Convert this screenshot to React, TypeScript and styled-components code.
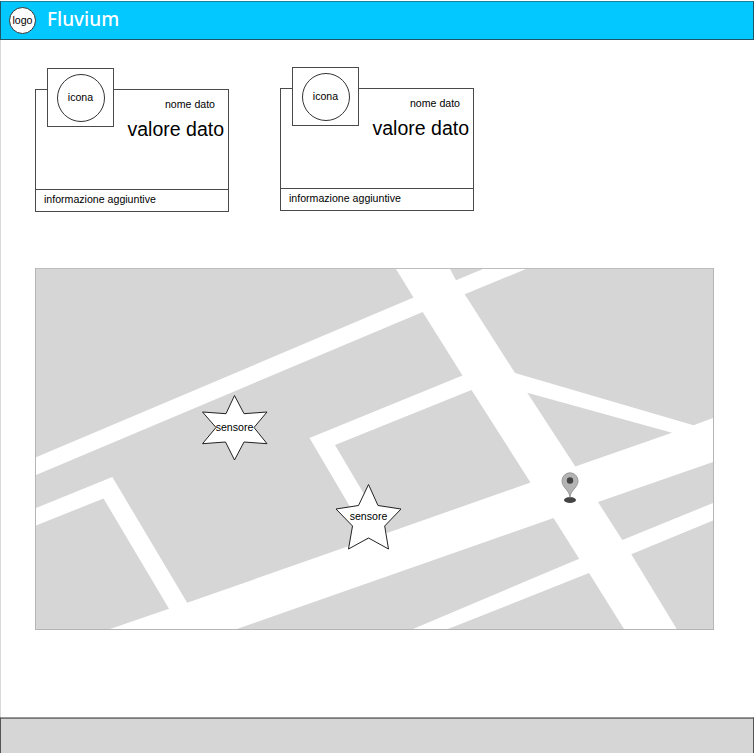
import React from "react";
import styled, { createGlobalStyle } from "styled-components";

const GlobalStyle = createGlobalStyle`
  * { box-sizing: border-box; }
  body {
    margin: 0;
    background: #fff;
    color: #000;
    font-family: "Liberation Sans", Arial, sans-serif;
    font-size: 10.6px;
    line-height: 13px;
  }
`;

const Page = styled.div`
  height: 753px;
  display: flex;
  flex-direction: column;
  overflow: hidden;
`;

const Header = styled.header`
  margin: 1px 1px 0 0;
  flex: none;
  height: 39px;
  display: flex;
  align-items: center;
  gap: 11px;
  padding: 0 0 0 8px;
  background: #03c7ff;
  border: 1px solid #1c5666;
  border-top-color: #1d7f9b;
`;

const Logo = styled.div`
  width: 27px;
  height: 27px;
  flex: none;
  display: flex;
  align-items: center;
  justify-content: center;
  border: 1px solid #333;
  border-radius: 50%;
  background: #fff;
`;

const Brand = styled.h1`
  margin: 0;
  padding-bottom: 3px;
  color: #fff;
  font-family: "Noto Sans", sans-serif;
  font-size: 19px;
  font-weight: 500;
  line-height: 24px;
`;

const Main = styled.main`
  flex: 1;
  border-left: 1px solid #d9d9d9;
  padding: 28px 0 0 34px;
`;

const Cards = styled.section`
  display: flex;
  align-items: flex-start;
  gap: 51px;
  height: 200px;
`;

const Card = styled.article<{ $top: number }>`
  position: relative;
  width: 194px;
  height: 123px;
  margin-top: ${(p) => p.$top}px;
  display: flex;
  flex-direction: column;
  border: 1px solid #4a4a4a;
  background: #fff;
`;

const IconFrame = styled.div`
  position: absolute;
  top: -22px;
  left: 11px;
  width: 67px;
  height: 59px;
  display: flex;
  align-items: center;
  justify-content: center;
  border: 1px solid #4a4a4a;
  background: #fff;
`;

const IconCircle = styled.div`
  width: 48px;
  height: 48px;
  display: flex;
  align-items: center;
  justify-content: center;
  border: 1px solid #333;
  border-radius: 50%;
`;

const CardBody = styled.div`
  flex: 1;
  display: flex;
  flex-direction: column;
  align-items: flex-end;
  padding-top: 8px;
`;

const DataName = styled.div`
  padding-right: 13px;
`;

const DataValue = styled.div`
  margin-top: 7px;
  padding-right: 4px;
  font-size: 19.5px;
  line-height: 23px;
`;

const CardFooter = styled.div`
  height: 22px;
  padding: 3px 0 0 8px;
  border-top: 1px solid #4a4a4a;
`;

const MapPanel = styled.section`
  position: relative;
  width: 679px;
  height: 362px;
  border: 1px solid #b5b5b5;
  border-top-color: #bdbdbd;
  background: #fff;
`;

const MapDrawing = styled.svg`
  display: block;
  width: 677px;
  height: 360px;
`;

const Marker = styled.div<{ $x: number; $y: number }>`
  position: absolute;
  left: ${(p) => p.$x}px;
  top: ${(p) => p.$y}px;
  width: 67px;
  height: 66px;
  display: flex;
  align-items: center;
  justify-content: center;
`;

const MarkerShape = styled.svg`
  position: absolute;
  top: 0;
  left: 0;
  width: 68px;
  height: 68px;
`;

const MarkerLabel = styled.span`
  position: relative;
`;

const Pin = styled.svg`
  position: absolute;
  left: 524px;
  top: 202px;
  width: 20px;
  height: 34px;
`;

const Footer = styled.footer`
  height: 36px;
  flex: none;
  margin-right: 1px;
  background: #d6d6d6;
  border: 1px solid #555;
  border-top-color: #999;
  border-bottom: 0;
  box-shadow: inset 0 1px 0 #777;
`;

const blocks = [
  "36,269 396,269 413.5,297.5 36,457.3",
  "450,269 483,269 456,280.3",
  "526,269 713,269 713,418 693.5,425.2 515,373 464.7,294.3",
  "36,475 422.7,312 462.5,375.5 309.5,438 369,539 187.2,602.8 112.3,477 36,508",
  "36,525.5 103.5,498.5 169,608.7 110,629 36,629",
  "335,445 471.5,390 530.5,482.5 387,533",
  "527.3,392.7 672,432.8 575.3,466.5",
  "598,502 713,462 713,503 622.3,540",
  "713,520.5 713,629 676.7,629 631.3,554.3",
  "553.5,518 579.2,558.7 413,629 237,629",
  "589,573 624,629 448,629",
];

const cards = [
  { id: 1, top: 21 },
  { id: 2, top: 20 },
];

const sensors = [
  {
    id: "a",
    x: 165,
    y: 125,
    points:
      "33.5,1.5 43,19.7 66,18 53,33.5 66,49.7 43,48 33.5,66 24.5,48 1.5,49.7 15,33.5 1.5,18 25,19.7",
  },
  {
    id: "b",
    x: 299,
    y: 214,
    points:
      "33.5,1.5 43,22.5 66,26 49.7,43 53.5,66 33.5,55 13.5,66 17.5,43 1,26 23.5,22.5",
  },
];

export default function App() {
  return (
    <Page>
      <GlobalStyle />
      <Header>
        <Logo>logo</Logo>
        <Brand>Fluvium</Brand>
      </Header>
      <Main>
        <Cards>
          {cards.map((card) => (
            <Card key={card.id} $top={card.top}>
              <IconFrame>
                <IconCircle>icona</IconCircle>
              </IconFrame>
              <CardBody>
                <DataName>nome dato</DataName>
                <DataValue>valore dato</DataValue>
              </CardBody>
              <CardFooter>informazione aggiuntive</CardFooter>
            </Card>
          ))}
        </Cards>
        <MapPanel>
          <MapDrawing viewBox="36 269 677 360">
            {blocks.map((points) => (
              <polygon key={points} points={points} fill="#d6d6d6" />
            ))}
          </MapDrawing>
          {sensors.map((sensor) => (
            <Marker key={sensor.id} $x={sensor.x} $y={sensor.y}>
              <MarkerShape viewBox="0 0 68 68">
                <polygon points={sensor.points} fill="#fff" stroke="#222" strokeWidth="1" />
              </MarkerShape>
              <MarkerLabel>sensore</MarkerLabel>
            </Marker>
          ))}
          <Pin viewBox="0 0 20 34">
            <ellipse cx="10" cy="29" rx="6" ry="3" fill="#444" />
            <path
              d="M10 26.5C9.7 19 2 17 2 9.8a8 8 0 0 1 16 0C18 17 10.3 19 10 26.5Z"
              fill="#b3b3b3"
              stroke="#999"
            />
            <circle cx="10" cy="9.5" r="3.2" fill="#444" />
          </Pin>
        </MapPanel>
      </Main>
      <Footer />
    </Page>
  );
}
